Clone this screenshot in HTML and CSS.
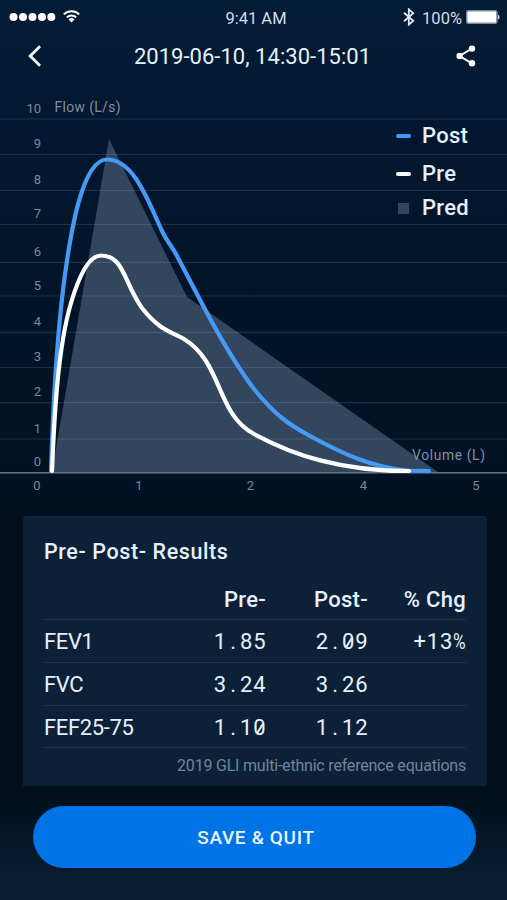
FILE: index.html
```html
<!DOCTYPE html>
<html lang="en">
<head>
<meta charset="utf-8">
<title>Spirometry results</title>
<link rel="stylesheet" href="styles.css">
</head>
<body>
<main class="screen">
  <div class="status">
    <svg class="signal" width="72" height="16" viewBox="0 0 72 16" aria-hidden="true">
      <g fill="#fff"><circle cx="4.5" cy="9" r="4"/><circle cx="14" cy="9" r="4"/><circle cx="23.5" cy="9" r="4"/><circle cx="33" cy="9" r="4"/><circle cx="42.3" cy="9" r="4"/></g>
      <g fill="none" stroke="#fff" stroke-width="2"><path d="M54.8 6.4a11 11 0 0 1 15.4 0"/><path d="M57.8 9.4a6.8 6.8 0 0 1 9.4 0"/></g>
      <path d="M62.5 14.5l-2.9-3a4.2 4.2 0 0 1 5.800 0z" fill="#fff"/>
    </svg>
    <span class="clock">9:41 AM</span>
    <div class="power">
      <svg width="12" height="18" viewBox="0 0 12 18" fill="none" stroke="#dfe8f5" stroke-width="1.8" aria-hidden="true"><path d="M1 4.800l9.200 8-4.400 3.900V1.300l4.400 3.900-9.200 8"/></svg>
      <span class="percent">100%</span>
      <svg width="34" height="14" viewBox="0 0 34 14" aria-hidden="true"><rect x=".7" y=".7" width="30.2" height="12.6" rx="1.5" fill="#fff" stroke="#7e8b9d" stroke-width="1.4"/><path d="M31.800 4.500q1.800.5 1.800 2.500t-1.800 2.500z" fill="#cbd3df"/></svg>
    </div>
  </div>
  <header class="bar">
    <svg class="back" width="14" height="22" viewBox="0 0 14 22" fill="none" stroke="#fff" stroke-width="2.8" aria-hidden="true"><path d="M12 1.300L2.200 11 12 20.700"/></svg>
    <h1>2019-06-10, 14:30-15:01</h1>
    <svg class="share" width="20" height="22" viewBox="0 0 20 22" aria-hidden="true"><path d="M16 3.500L3.500 11 16 18.300" fill="none" stroke="#fff" stroke-width="2"/><g fill="#fff"><circle cx="16" cy="3.6" r="3.2"/><circle cx="3.6" cy="11" r="3.2"/><circle cx="16" cy="18.2" r="3.2"/></g></svg>
  </header>
  <section class="chart">
    <svg class="plot" width="507" height="410" viewBox="0 95 507 410">
      <path class="pred" d="M52 472L109 139L187 297L438 472Z"/>
      <path class="grid" d="M0 119H507M0 154.500H507M0 190.500H507M0 224.500H507M0 262.300H507M0 296H507M0 332.300H507M0 367.500H507M0 402.700H507M0 439H507"/>
      <path class="axis" d="M0 472.800H507"/>
      <g class="ticks" text-anchor="end">
        <text x="41" y="112.5">10</text><text x="41" y="148">9</text><text x="41" y="184.4">8</text><text x="41" y="218">7</text><text x="41" y="256">6</text><text x="41" y="290">5</text><text x="41" y="326">4</text><text x="41" y="361">3</text><text x="41" y="396.4">2</text><text x="41" y="433">1</text><text x="41" y="466.4">0</text>
      </g>
      <g class="ticks" text-anchor="middle">
        <text x="37" y="490.4">0</text><text x="139" y="490.4">1</text><text x="250.5" y="490.4">2</text><text x="363.5" y="490.4">4</text><text x="476" y="490.4">5</text>
      </g>
      <text class="label" x="54.5" y="112.3" textLength="66">Flow (L/s)</text>
      <text class="label" x="412" y="460.4" textLength="73">Volume (L)</text>
      <path class="line post" d="M51 471C53 405 57 340 63 290C70 233 82 159.500 107 159.500C135 159.500 149 204 163 233C167 241 171 245 176 254L197 294C215 329 235 364 254 389C275 415 288 424 310 436C345 455 372 467 406 470.500L429 471"/>
      <path class="line pre" d="M52 471C54 425 57 350 71 303C79 276 89 255.500 101 255.500C124 255.500 124 283 142 308C160 331 172 332 184 339C223 363 216 414 254 434C293 455 340 471 409 471"/>
    </svg>
    <ul class="legend">
      <li><i class="dash blue"></i>Post</li>
      <li><i class="dash"></i>Pre</li>
      <li><i class="square"></i>Pred</li>
    </ul>
  </section>
  <section class="card">
    <h2>Pre- Post- Results</h2>
    <div class="row head"><span></span><b>Pre-</b><b>Post-</b><b>% Chg</b></div>
    <div class="row"><span>FEV1</span>
      <span class="num"><i>1</i><i>.</i><i>8</i><i>5</i></span>
      <span class="num"><i>2</i><i>.</i><i class="zero">0</i><i>9</i></span>
      <span class="num"><i>+</i><i>1</i><i>3</i><i class="pct">%</i></span></div>
    <div class="row third"><span>FVC</span>
      <span class="num"><i>3</i><i>.</i><i>2</i><i>4</i></span>
      <span class="num"><i>3</i><i>.</i><i>2</i><i>6</i></span></div>
    <div class="row"><span>FEF25-75</span>
      <span class="num"><i>1</i><i>.</i><i>1</i><i class="zero">0</i></span>
      <span class="num"><i>1</i><i>.</i><i>1</i><i>2</i></span></div>
    <p>2019 GLI multi-ethnic reference equations</p>
  </section>
  <footer><button type="button">SAVE &amp; QUIT</button></footer>
</main>
</body>
</html>
```
FILE: styles.css
```css
* { box-sizing: border-box; }
body { margin: 0; background: #02101f; color: #e6f0fc; font-family: Roboto, "Liberation Sans", sans-serif; }
.screen { width: 507px; height: 900px; overflow: hidden; display: flex; flex-direction: column; background: linear-gradient(#031c36 0, #031831 110px, #021428 300px, #021224 490px, #010e1b 525px, #010e1b 790px, #061a2e 860px, #0a2032 900px); }
svg { display: block; flex: none; }
.status { height: 36px; display: grid; grid-template-columns: 1fr auto 1fr; align-items: start; padding: 8px 7px 0 9px; }
.clock { font-size: 16.5px; line-height: 22px; margin-left: 3px; color: #d3deec; }
.power { height: 18px; display: flex; align-items: center; justify-content: flex-end; }
.percent { font-size: 16.5px; line-height: 20px; margin: 4px 4px 0 7px; color: #d3deec; }
.bar { height: 59px; display: flex; align-items: flex-start; justify-content: space-between; padding: 9px 31px 0 28px; }
h1 { margin: 0 0 0 7px; font-size: 22px; line-height: 24px; font-weight: 400; letter-spacing: 0.03px; white-space: nowrap; }
.chart { position: relative; height: 410px; }
.pred { fill: #32465e; }
.grid { stroke: #a8bfd8; stroke-opacity: .16; stroke-width: 1.2; }
.axis { stroke: #667485; stroke-width: 1.5; }
.ticks { fill: #7b8998; font-size: 13px; }
.label { fill: #8390a1; font-size: 13.8px; }
.line { fill: none; stroke-width: 4.2; stroke-linecap: round; stroke-linejoin: round; }
.post { stroke: #459af5; }
.pre { stroke: #fff; }
.legend { position: absolute; left: 396px; top: 27px; margin: 0; padding: 0; list-style: none; font-size: 22px; font-weight: 500; letter-spacing: .3px; }
.legend li { height: 38px; line-height: 28px; display: grid; grid-template-columns: 26px auto; align-items: start; }
.legend li:nth-child(2) { height: 34px; }
.dash { width: 15px; height: 4px; margin-top: 12px; border-radius: 2px; background: #f5faff; }
.blue { background: #459af5; }
.square { width: 11px; height: 11px; margin: 9px 0 0 2px; background: #32465e; }
.card { width: 464px; height: 270px; margin: 11px 0 0 23px; padding: 21px 21px 0; border-radius: 4px 4px 0 0; background: #0c2137; border-top: 1px solid #102940; }
h2 { margin: 0; font-size: 21.5px; line-height: 28px; font-weight: 500; letter-spacing: .6px; }
.row { display: grid; grid-template-columns: 121px 101px 102px 98px; height: 42.500px; padding-top: 2px; align-items: center; border-bottom: 1px solid #203248; font-size: 22px; letter-spacing: -.35px; }
.row.third { height: 43px; }
.head { height: 54px; padding-top: 13px; }
.head b { font-weight: 500; text-align: right; letter-spacing: .3px; }
.num { display: grid; grid-template-columns: repeat(4, 13.200px); justify-content: end; letter-spacing: 0; }
.num i { font-style: normal; text-align: center; position: relative; }
.num .pct { transform: scaleX(.78); transform-origin: left; }
.zero::after { content: ""; position: absolute; left: 6px; top: 8px; width: 1.5px; height: 11px; background: currentColor; transform: rotate(31deg); }
.card p { margin: 6px 0 0; text-align: right; font-size: 16px; line-height: 24px; letter-spacing: -.2px; color: #71859b; white-space: nowrap; }
footer { padding: 20px 31px 0 33px; }
button { display: block; width: 100%; height: 62px; border: 0; border-radius: 31px; background: #0073e6; color: #e8f5ff; font: 500 19px/62px Roboto, "Liberation Sans", sans-serif; letter-spacing: .65px; padding: 1px 0 0 3px; }
```
